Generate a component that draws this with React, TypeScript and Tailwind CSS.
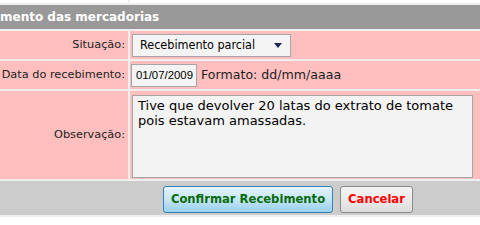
import { useState } from 'react';

const font = { fontFamily: '"DejaVu Sans", Verdana, sans-serif' };
const fieldFont = { fontFamily: '"DejaVu Sans Condensed", Tahoma, "Liberation Sans", sans-serif' };

export default function App() {
    const [obs, setObs] = useState('Tive que devolver 20 latas do extrato de tomate pois estavam amassadas.');

    return (
        <div className="w-[480px] h-[225px] overflow-hidden bg-[#efefef]" style={font}>
            <div className="grid grid-cols-[128px_1fr] gap-x-[2px] gap-y-[2px]">
                {/* previous row, cut off */}
                <div className="h-[3px] bg-white" />
                <div className="h-[3px] bg-white" />

                {/* header */}
                <div className="col-span-2 h-[24px] bg-[#999999] flex items-center text-[12px] font-bold text-white whitespace-nowrap">
                    mento das mercadorias
                </div>

                {/* Situação */}
                <div className="h-[28px] bg-[#ffbfbf] flex items-center justify-end pr-[3px] text-[11.3px] text-[#222]">
                    Situação:
                </div>
                <div className="h-[28px] bg-[#ffbfbf] flex items-center pl-[2px]">
                    <div
                        className="h-[23px] w-[159px] border border-[#a5a5a5] bg-[#f4f4f4] flex items-center justify-between pl-[7px] pr-[8px] text-[12.5px] text-black"
                        style={fieldFont}
                    >
                        <span>Recebimento parcial</span>
                        <svg width="8" height="5" viewBox="0 0 8 5">
                            <path d="M0 0 L8 0 L4 5 Z" fill="#1b2a5a" />
                        </svg>
                    </div>
                </div>

                {/* Data */}
                <div className="h-[28px] bg-[#ffbfbf] flex items-center justify-end pr-[3px] text-[11.3px] text-[#222]">
                    Data do recebimento:
                </div>
                <div className="h-[28px] bg-[#ffbfbf] flex items-center pl-[1px] gap-[4px]">
                    <input
                        defaultValue="01/07/2009"
                        className="h-[23px] w-[66px] border border-[#a5a5a5] bg-[#f4f4f4] pl-[4px] pr-0 text-[11.4px] text-black outline-none"
                        style={{ fontFamily: '"Liberation Sans", Arial, sans-serif' }}
                    />
                    <span className="text-[12.6px] text-[#222]">Formato: dd/mm/aaaa</span>
                </div>

                {/* Observação */}
                <div className="h-[88px] bg-[#ffbfbf] flex items-center justify-end pr-[3px] text-[11.3px] text-[#222]">
                    Observação:
                </div>
                <div className="h-[88px] bg-[#ffbfbf] pl-[2px] pt-[4px]">
                    <textarea
                        value={obs}
                        onChange={(e) => setObs(e.target.value)}
                        className="block h-[83px] w-[341px] resize-none border border-[#a5a5a5] bg-[#f3f3f3] px-[5px] py-[2px] text-[13px] leading-[15px] text-black outline-none"
                        style={font}
                    />
                </div>

                {/* buttons */}
                <div className="col-span-2 h-[34px] bg-[#cccccc] flex items-start justify-center gap-[7px] pt-[5px] pl-[96px]">
                    <button
                        className="h-[27px] w-[170px] rounded-[3px] border border-[#3c7fb1] bg-gradient-to-b from-[#e5f4fc] via-[#c4e5f6] to-[#98d1ef] text-[11.6px] font-bold text-[#0b6a0b]"
                        style={font}
                    >
                        Confirmar Recebimento
                    </button>
                    <button
                        className="h-[27px] w-[73px] rounded-[3px] border border-[#8a8a8a] bg-gradient-to-b from-[#f4f4f4] via-[#ebebeb] to-[#dcdcdc] text-[11.6px] font-bold text-[#ff0000]"
                        style={font}
                    >
                        Cancelar
                    </button>
                </div>
                <div className="col-span-2 h-[10px] bg-white" />
            </div>
        </div>
    );
}
